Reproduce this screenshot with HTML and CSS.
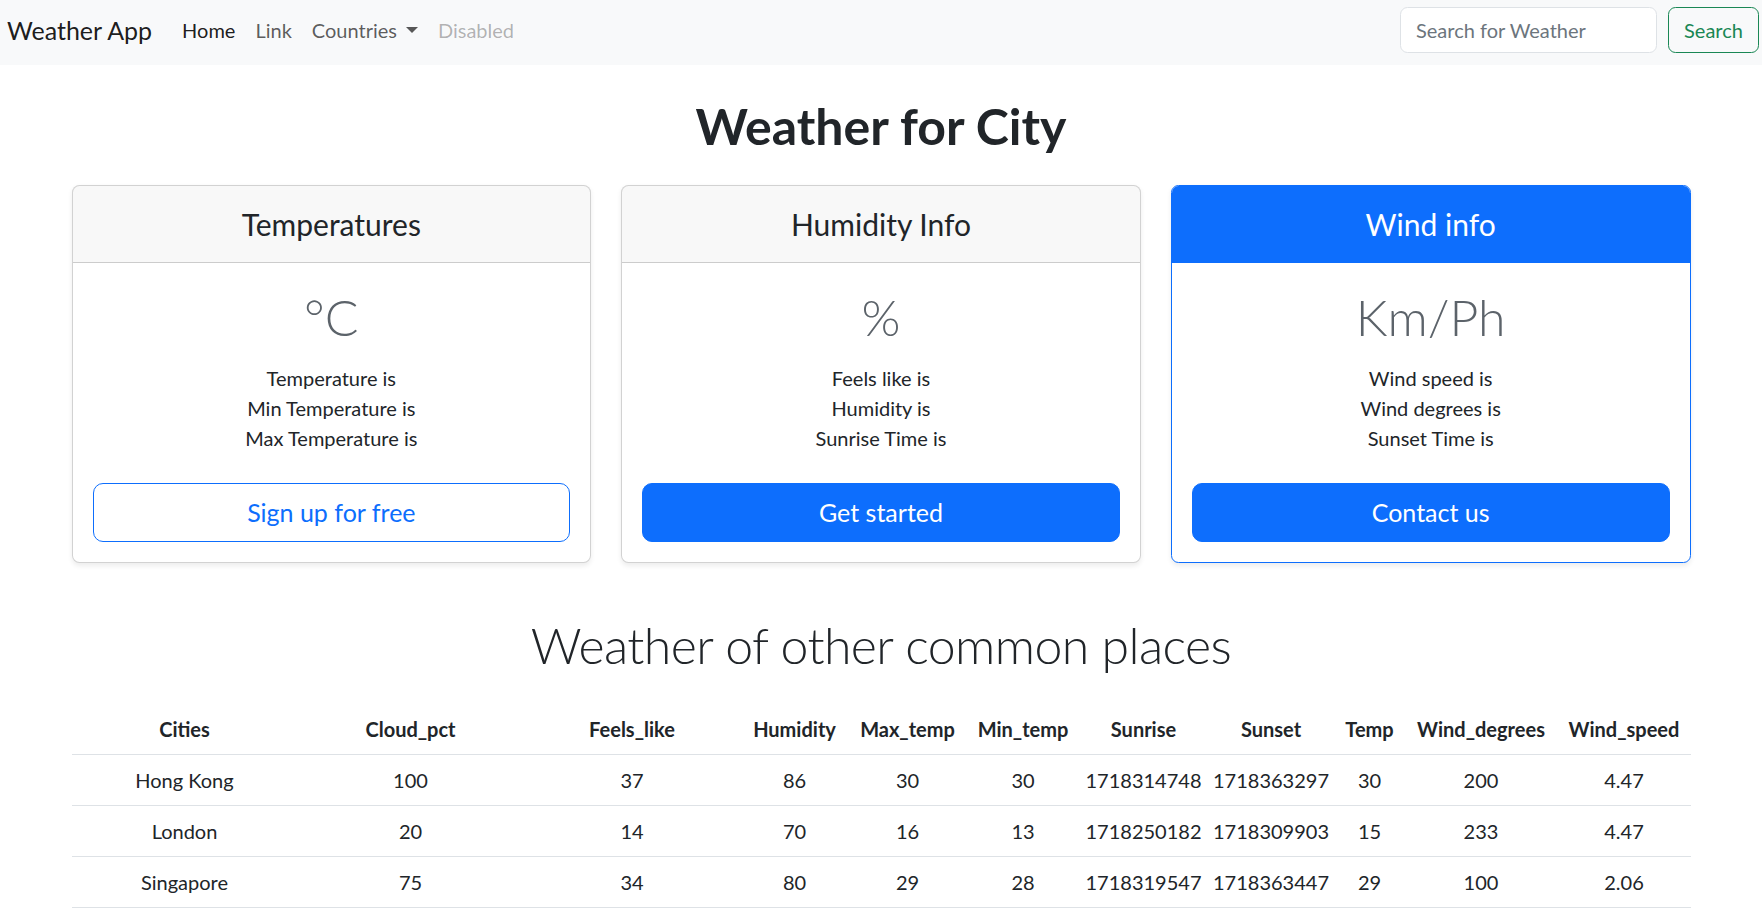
FILE: index.html
```html
<!DOCTYPE html>
<html lang="en">
<head>
<meta charset="utf-8">
<title>Weather App</title>
<link rel="stylesheet" href="styles.css">
</head>
<body>
<nav class="navbar">
  <a class="brand" href="#">Weather App</a>
  <ul class="nav">
    <li><a class="nav-link active" href="#">Home</a></li>
    <li><a class="nav-link" href="#">Link</a></li>
    <li><a class="nav-link dropdown" href="#">Countries</a></li>
    <li><a class="nav-link disabled" href="#">Disabled</a></li>
  </ul>
  <form class="search">
    <input class="search-input" type="search" placeholder="Search for Weather">
    <button class="search-btn" type="button">Search</button>
  </form>
</nav>

<main class="container">
  <h1 class="page-title">Weather for City</h1>

  <div class="cards">
    <div class="card">
      <div class="card-header"><h4>Temperatures</h4></div>
      <div class="card-body">
        <h1 class="unit">°C</h1>
        <ul class="facts">
          <li>Temperature is</li>
          <li>Min Temperature is</li>
          <li>Max Temperature is</li>
        </ul>
        <button class="btn btn-outline" type="button">Sign up for free</button>
      </div>
    </div>
    <div class="card">
      <div class="card-header"><h4>Humidity Info</h4></div>
      <div class="card-body">
        <h1 class="unit">%</h1>
        <ul class="facts">
          <li>Feels like is</li>
          <li>Humidity is</li>
          <li>Sunrise Time is</li>
        </ul>
        <button class="btn btn-primary" type="button">Get started</button>
      </div>
    </div>
    <div class="card card-primary">
      <div class="card-header"><h4>Wind info</h4></div>
      <div class="card-body">
        <h1 class="unit">Km/Ph</h1>
        <ul class="facts">
          <li>Wind speed is</li>
          <li>Wind degrees is</li>
          <li>Sunset Time is</li>
        </ul>
        <button class="btn btn-primary" type="button">Contact us</button>
      </div>
    </div>
  </div>

  <h2 class="section-title">Weather of other common places</h2>

  <table class="table">
    <colgroup>
      <col class="c-city"><col class="c-cloud"><col class="c-feels"><col class="c-hum"><col class="c-max"><col class="c-min"><col class="c-rise"><col class="c-set"><col class="c-temp"><col class="c-wdeg"><col class="c-wspd">
    </colgroup>
    <thead>
      <tr>
        <th>Cities</th><th>Cloud_pct</th><th>Feels_like</th><th>Humidity</th><th>Max_temp</th><th>Min_temp</th><th>Sunrise</th><th>Sunset</th><th>Temp</th><th>Wind_degrees</th><th>Wind_speed</th>
      </tr>
    </thead>
    <tbody>
      <tr>
        <td>Hong Kong</td><td>100</td><td>37</td><td>86</td><td>30</td><td>30</td><td>1718314748</td><td>1718363297</td><td>30</td><td>200</td><td>4.47</td>
      </tr>
      <tr>
        <td>London</td><td>20</td><td>14</td><td>70</td><td>16</td><td>13</td><td>1718250182</td><td>1718309903</td><td>15</td><td>233</td><td>4.47</td>
      </tr>
      <tr>
        <td>Singapore</td><td>75</td><td>34</td><td>80</td><td>29</td><td>28</td><td>1718319547</td><td>1718363447</td><td>29</td><td>100</td><td>2.06</td>
      </tr>
    </tbody>
  </table>
</main>
</body>
</html>
```

FILE: styles.css
```css
* { box-sizing: border-box; }

html, body {
  margin: 0;
  padding: 0;
  background: #fff;
}

body {
  font-family: Lato, "Open Sans", "Liberation Sans", sans-serif;
  font-size: 20px;
  line-height: 1.5;
  color: #212529;
  overflow: hidden;
}

a { text-decoration: none; }

/* ---------- navbar ---------- */
.navbar {
  height: 65px;
  background: #f8f9fa;
  display: flex;
  align-items: flex-start;
  padding: 7px 3px 0 7px;
}

.brand {
  font-size: 25px;
  line-height: 46px;
  color: rgba(0, 0, 0, 0.9);
  margin-right: 20px;
  white-space: nowrap;
}

.nav {
  list-style: none;
  margin: 0;
  padding: 0;
  display: flex;
}

.nav-link {
  display: block;
  padding: 0 10px;
  line-height: 46px;
  color: rgba(0, 0, 0, 0.65);
}

.nav-link.active { color: rgba(0, 0, 0, 0.9); }
.nav-link.disabled { color: rgba(0, 0, 0, 0.3); }

.nav-link.dropdown::after {
  content: "";
  display: inline-block;
  margin-left: 0.45em;
  vertical-align: 0.255em;
  border-top: 0.3em solid;
  border-right: 0.3em solid transparent;
  border-left: 0.3em solid transparent;
  border-bottom: 0;
}

.search {
  margin-left: auto;
  display: flex;
  gap: 11px;
}

.search-input {
  width: 257px;
  height: 46px;
  padding: 0 15px;
  font: inherit;
  color: #212529;
  background: #fff;
  border: 1px solid #dee2e6;
  border-radius: 7.5px;
  outline: none;
}

.search-input::placeholder { color: #6c757d; opacity: 1; }

.search-btn {
  width: 91px;
  height: 46px;
  padding: 0;
  font: inherit;
  color: #198754;
  background: transparent;
  border: 1px solid #198754;
  border-radius: 7.5px;
}

/* ---------- main ---------- */
.container {
  width: 1619px;
  margin: 0 auto;
}

.page-title {
  margin: 31px 0 0;
  font-size: 50px;
  line-height: 60px;
  font-weight: 700;
  text-align: center;
}

.cards {
  margin-top: 29px;
  display: grid;
  grid-template-columns: repeat(3, 1fr);
  column-gap: 30px;
}

.card {
  border: 1px solid rgba(0, 0, 0, 0.175);
  border-radius: 7.5px;
  box-shadow: 0 2.5px 5px rgba(0, 0, 0, 0.075);
  overflow: hidden;
  background: #fff;
}

.card-header {
  padding: 20px;
  background: rgba(33, 37, 41, 0.03);
  border-bottom: 1px solid rgba(0, 0, 0, 0.175);
  text-align: center;
}

.card-header h4 {
  margin: 0;
  font-size: 30px;
  line-height: 36px;
  font-weight: 400;
}

.card-primary { border-color: #0d6efd; }
.card-primary .card-header {
  background: #0d6efd;
  border-bottom-color: #0d6efd;
  color: #fff;
}

.card-body {
  padding: 20px;
  text-align: center;
}

.unit {
  margin: 4px 0 0;
  font-size: 50px;
  line-height: 60px;
  font-weight: 300;
  color: #5c636a;
}

.facts {
  list-style: none;
  margin: 16px 0 30px;
  padding: 0;
}

.btn {
  display: block;
  width: 100%;
  height: 59px;
  padding: 0 20px;
  font: inherit;
  font-size: 25px;
  border-radius: 10px;
  border: 1px solid #0d6efd;
}

.btn-outline { background: #fff; color: #0d6efd; }
.btn-primary { background: #0d6efd; color: #fff; }

.section-title {
  margin: 52px 0 0;
  font-size: 50px;
  line-height: 60px;
  font-weight: 300;
  letter-spacing: -0.6px;
  text-align: center;
}

.table {
  margin-top: 29px;
  width: 100%;
  table-layout: fixed;
  border-collapse: collapse;
}

.table th,
.table td {
  padding: 10px 0;
  line-height: 30px;
  text-align: center;
  white-space: nowrap;
  border-bottom: 1px solid #dee2e6;
}

.table th { font-weight: 700; }

.c-city  { width: 226px; }
.c-cloud { width: 226px; }
.c-feels { width: 217px; }
.c-hum   { width: 108px; }
.c-max   { width: 118px; }
.c-min   { width: 113px; }
.c-rise  { width: 128px; }
.c-set   { width: 127px; }
.c-temp  { width: 70px; }
.c-wdeg  { width: 153px; }
.c-wspd  { width: 133px; }
```
